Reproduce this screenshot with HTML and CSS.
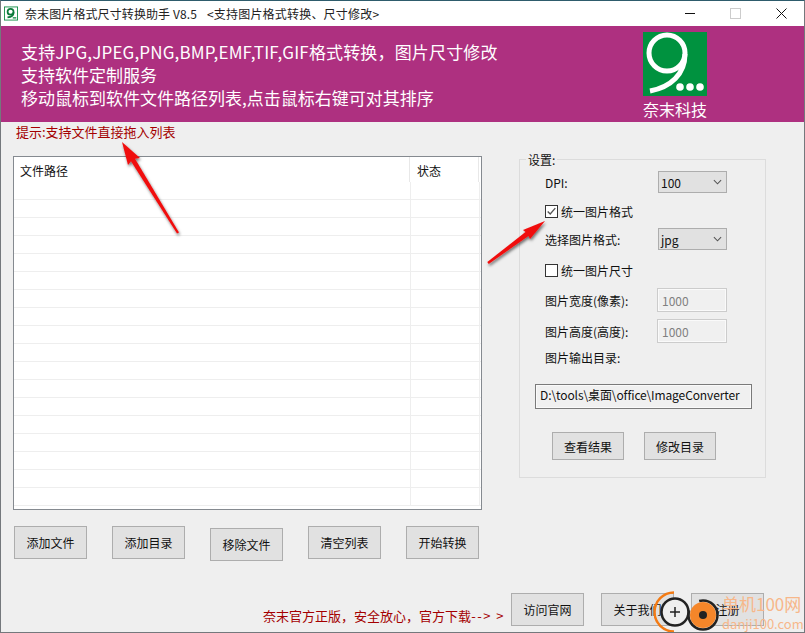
FILE: index.html
```html
<!DOCTYPE html>
<html lang="zh-CN">
<head>
  <meta charset="UTF-8">
  <title>奈末图片格式尺寸转换助手</title>
  <link rel="stylesheet" href="styles.css">
</head>
<body>
  <div class="window">
    <div class="titlebar">
      <svg class="app-icon" viewBox="0 0 16 16">
        <rect x="0.5" y="0.5" width="15" height="15" fill="#fff" stroke="#0a8a40"/>
        <circle cx="7.5" cy="6" r="3.4" fill="none" stroke="#0a7a3a" stroke-width="2"/>
        <path d="M11 6.500C11 10 8 12 4 12.500" fill="none" stroke="#0a7a3a" stroke-width="2"/>
        <path d="M10 13h4" stroke="#0a8a40" stroke-width="1.5"/>
      </svg>
      <span class="title-text">奈末图片格式尺寸转换助手 V8.5</span>
      <span class="title-sub">&lt;支持图片格式转换、尺寸修改&gt;</span>
      <div class="win-controls">
        <span class="win-min"></span>
        <span class="win-max"></span>
        <svg class="win-close" viewBox="0 0 11 11"><path d="M0.5 0.5l10 10M10.5 0.5l-10 10" stroke="#111" fill="none"/></svg>
      </div>
    </div>

    <div class="banner">
      <div class="banner-text">
        <div class="line-wide">支持JPG,JPEG,PNG,BMP,EMF,TIF,GIF格式转换，图片尺寸修改</div>
        <div>支持软件定制服务</div>
        <div>移动鼠标到软件文件路径列表,点击鼠标右键可对其排序</div>
      </div>
      <div class="brand">
        <svg class="brand-logo" viewBox="0 0 64 64">
          <rect width="64" height="64" fill="#00923f"/>
          <circle cx="24" cy="21" r="18" fill="none" stroke="#fff" stroke-width="5"/>
          <path d="M42 22C42 42 28 55 7 59" fill="none" stroke="#fff" stroke-width="5"/>
          <circle cx="37" cy="55" r="3.8" fill="#fff"/>
          <circle cx="47" cy="55" r="3.8" fill="#fff"/>
          <circle cx="57" cy="55" r="3.8" fill="#fff"/>
        </svg>
        <div class="brand-name">奈末科技</div>
      </div>
    </div>

    <div class="main">
      <div class="left">
        <div class="hint">提示:支持文件直接拖入列表</div>
        <div class="list-box">
          <table class="file-list">
            <thead>
              <tr><th class="col-path"><span>文件路径</span></th><th class="col-state"><span>状态</span></th><th class="col-rest"></th></tr>
            </thead>
            <tbody>
              <tr><td></td><td></td><td></td></tr>
              <tr><td></td><td></td><td></td></tr>
              <tr><td></td><td></td><td></td></tr>
              <tr><td></td><td></td><td></td></tr>
              <tr><td></td><td></td><td></td></tr>
              <tr><td></td><td></td><td></td></tr>
              <tr><td></td><td></td><td></td></tr>
              <tr><td></td><td></td><td></td></tr>
              <tr><td></td><td></td><td></td></tr>
              <tr><td></td><td></td><td></td></tr>
              <tr><td></td><td></td><td></td></tr>
              <tr><td></td><td></td><td></td></tr>
              <tr><td></td><td></td><td></td></tr>
              <tr><td></td><td></td><td></td></tr>
              <tr><td></td><td></td><td></td></tr>
              <tr><td></td><td></td><td></td></tr>
              <tr><td></td><td></td><td></td></tr>
              <tr><td></td><td></td><td></td></tr>
            </tbody>
          </table>
        </div>
        <div class="actions">
          <button class="btn btn-action">添加文件</button>
          <button class="btn btn-action">添加目录</button>
          <button class="btn btn-action btn-low">移除文件</button>
          <button class="btn btn-action">清空列表</button>
          <button class="btn btn-action">开始转换</button>
        </div>
      </div>

      <fieldset class="settings">
        <legend>设置:</legend>
        <div class="row row-first">
          <span class="label">DPI:</span>
          <div class="combo"><span>100</span><svg viewBox="0 0 10 6"><path d="M1 1l4 4 4-4" fill="none" stroke="#555" stroke-width="1.2"/></svg></div>
        </div>
        <div class="row row-check">
          <span class="check"><svg viewBox="0 0 13 13"><path d="M2 6.5l3 3 6-7" fill="none" stroke="#555" stroke-width="1.6"/></svg></span>
          <span>统一图片格式</span>
        </div>
        <div class="row">
          <span class="label">选择图片格式:</span>
          <div class="combo"><span>jpg</span><svg viewBox="0 0 10 6"><path d="M1 1l4 4 4-4" fill="none" stroke="#555" stroke-width="1.2"/></svg></div>
        </div>
        <div class="row row-check row-check-2">
          <span class="check"></span>
          <span>统一图片尺寸</span>
        </div>
        <div class="row row-input">
          <span class="label">图片宽度(像素):</span>
          <input class="num-input" value="1000" disabled>
        </div>
        <div class="row row-input row-input-2">
          <span class="label">图片高度(高度):</span>
          <input class="num-input" value="1000" disabled>
        </div>
        <div class="row row-out">
          <span class="label">图片输出目录:</span>
        </div>
        <input class="path-input" value="D:\tools\桌面\office\ImageConverter">
        <div class="dir-actions">
          <button class="btn btn-dir">查看结果</button>
          <button class="btn btn-dir">修改目录</button>
        </div>
      </fieldset>
    </div>

    <div class="footer">
      <span class="footer-text">奈末官方正版，安全放心，官方下载<span class="footer-arrow">--&gt;&nbsp;&gt;</span></span>
      <button class="btn btn-action">访问官网</button>
      <button class="btn btn-action">关于我们</button>
      <button class="btn btn-action">注册</button>
    </div>

    <!-- annotations drawn over the screenshot -->
    <svg class="arrows" viewBox="0 0 805 633">
      <defs>
        <filter id="shade" x="-30%" y="-30%" width="160%" height="160%">
          <feDropShadow dx="1" dy="2" stdDeviation="1.5" flood-color="#000" flood-opacity="0.55"/>
        </filter>
      </defs>
      <g fill="#f01010" filter="url(#shade)">
        <polygon points="122,142 140,158 135,158.700 179,232.400 177,233.600 131,161.300 128,165"/>
        <polygon points="545,221 530,239 528.500,236 488.700,264 487.300,262 525.500,232 523,230"/>
      </g>
    </svg>

    <div class="watermark">
      <svg class="wm-icon" viewBox="0 0 70 44">
        <path d="M20 2.500A19.500 19.500 0 0 0 20 41.500" fill="none" stroke="#f47a12" stroke-width="2.500"/>
        <circle cx="21" cy="22" r="13.500" fill="#efefef" stroke="#222" stroke-width="2.500"/>
        <path d="M21 17v10M16 22h10" stroke="#222" stroke-width="1.500"/>
        <circle cx="49" cy="25" r="14.500" fill="none" stroke="#222" stroke-width="2.500" stroke-dasharray="50 14"/>
        <circle cx="49" cy="25" r="13" fill="#f5862a"/>
        <circle cx="49" cy="25" r="4" fill="#222"/>
      </svg>
      <div class="wm-text">
        <div class="wm-cn">单机100网</div>
        <div class="wm-en">danji100.com</div>
      </div>
    </div>
  </div>
</body>
</html>
```

FILE: styles.css
```css
html, body {
  margin: 0;
  padding: 0;
  height: 100%;
  background: #efefef;
  overflow: hidden;
}

.window {
  position: relative;
  box-sizing: border-box;
  width: 805px;
  height: 633px;
  background: #efefef;
  border: 1px solid #74787c;
  border-top-color: #2e5c6c;
  font-family: "Noto Sans CJK SC", "Liberation Sans", sans-serif;
  font-size: 12px;
  color: #111;
  overflow: hidden;
}

.titlebar {
  display: flex;
  align-items: center;
  height: 25px;
  background: #fff;
  padding-left: 3px;
}

.app-icon {
  width: 14px;
  height: 15px;
}

.title-text {
  margin-left: 7px;
  color: #222;
  letter-spacing: 0.1px;
  white-space: pre;
}

.title-sub {
  margin-left: 10px;
  color: #222;
  letter-spacing: 0.2px;
}

.win-controls {
  display: flex;
  align-items: center;
  margin-left: auto;
  margin-right: 17px;
  gap: 35px;
}

.win-min {
  width: 10px;
  height: 1px;
  background: #111;
}

.win-max {
  box-sizing: border-box;
  width: 11px;
  height: 11px;
  border: 1px solid #ccc;
}

.win-close {
  width: 11px;
  height: 11px;
}

.banner {
  display: flex;
  justify-content: space-between;
  box-sizing: border-box;
  height: 96px;
  padding: 14px 97px 0 20px;
  background: #ae3080;
  color: #fff;
}

.banner-text {
  font-size: 17px;
  line-height: 23px;
}

.line-wide {
  letter-spacing: 0.16px;
}

.brand {
  margin-top: -8px;
  width: 64px;
}

.brand-logo {
  display: block;
  width: 64px;
  height: 64px;
}

.brand-name {
  font-size: 16px;
  line-height: 20px;
  margin-top: 3px;
  white-space: nowrap;
}

.main {
  display: flex;
  gap: 37px;
  padding-left: 12px;
}

.left {
  width: 469px;
}

.hint {
  box-sizing: border-box;
  height: 34px;
  padding: 1px 0 0 3px;
  font-size: 13px;
  line-height: 17px;
  color: #a40000;
}

.list-box {
  box-sizing: border-box;
  width: 469px;
  height: 354px;
  background: #fff;
  border: 1px solid #858a90;
}

.file-list {
  width: 467px;
  border-collapse: separate;
  border-spacing: 0;
  table-layout: fixed;
}

.file-list th {
  height: 25px;
  padding: 0;
  font-weight: normal;
  text-align: left;
  vertical-align: top;
}

.file-list th span {
  display: block;
  height: 25px;
  margin-right: 1px;
  padding: 5px 0 0 6px;
  box-sizing: border-box;
  line-height: 17px;
  border-right: 1px solid #e8e8e8;
}

.col-path { width: 397px; }
.col-state { width: 69px; }

.file-list td {
  height: 17px;
  padding: 0;
  border-bottom: 1px solid #eee;
  border-right: 1px solid #eee;
}

.file-list td:last-child {
  border-right: none;
}

.actions {
  display: flex;
  align-items: flex-start;
  gap: 25px;
  margin: 16px 0 0 1px;
}

.btn {
  box-sizing: border-box;
  margin: 0;
  padding: 0;
  background: #e1e1e1;
  border: 1px solid #adadad;
  font-family: inherit;
  font-size: 12px;
  color: #111;
}

.btn-action {
  width: 73px;
  height: 33px;
}

.btn-low {
  margin-top: 2px;
}

.settings {
  box-sizing: border-box;
  width: 247px;
  height: 327px;
  margin: 29px 0 0;
  padding: 0;
  border: 1px solid #dcdcdc;
}

.settings legend {
  margin-left: 6px;
  padding: 0 2px;
  font-size: 12px;
  line-height: 17px;
}

.row {
  display: flex;
  align-items: center;
  height: 22px;
  margin-left: 25px;
}

.row-first {
  margin-top: 3px;
}

.label {
  width: 113px;
  flex: none;
}

.combo {
  display: flex;
  align-items: center;
  justify-content: space-between;
  box-sizing: border-box;
  width: 69px;
  height: 22px;
  padding: 0 4px 0 2px;
  background: #e1e1e1;
  border: 1px solid #adadad;
}

.combo svg {
  width: 9px;
  height: 6px;
}

.row-check {
  box-sizing: border-box;
  height: 35px;
  padding-top: 2px;
  gap: 3px;
}

.row-check-2 {
  height: 38px;
}

.check {
  box-sizing: border-box;
  display: block;
  width: 13px;
  height: 13px;
  background: #fff;
  border: 1px solid #333;
}

.check svg {
  display: block;
  width: 11px;
  height: 11px;
}

.row-input {
  height: 24px;
}

.row-input-2 {
  margin-top: 7px;
}

.row-out {
  height: 28px;
}

.num-input {
  box-sizing: border-box;
  width: 70px;
  height: 24px;
  margin-left: -1px;
  padding: 0 4px;
  background: #f0f0f0;
  border: 1px solid #ccc;
  box-shadow: inset 0 0 0 1px #fafafa;
  font-family: inherit;
  font-size: 12px;
  color: #808080;
}

.path-input {
  display: block;
  box-sizing: border-box;
  width: 217px;
  height: 25px;
  margin: 13px 0 0 15px;
  padding: 0 4px 4px;
  background: #f0f0f0;
  border: 1px solid #7a7a7a;
  box-shadow: inset 0 0 0 1px #fafafa;
  font-family: inherit;
  font-size: 12px;
  letter-spacing: -0.1px;
  color: #111;
}

.dir-actions {
  display: flex;
  gap: 20px;
  margin: 23px 0 0 32px;
}

.btn-dir {
  width: 72px;
  height: 28px;
}

.footer {
  display: flex;
  align-items: center;
  margin-top: 32px;
  padding-right: 40px;
  justify-content: flex-end;
}

.footer .btn {
  margin-left: 17px;
}

.footer .btn:first-of-type {
  margin-left: 6px;
}

.footer-text {
  padding-top: 12px;
  font-size: 13px;
  color: #a40000;
}

.footer-arrow {
  letter-spacing: 1.5px;
}

.arrows {
  position: absolute;
  left: -1px;
  top: -1px;
  width: 805px;
  height: 633px;
  pointer-events: none;
}

.watermark {
  position: absolute;
  left: 653px;
  bottom: -2px;
  display: flex;
  align-items: flex-start;
}

.wm-icon {
  width: 70px;
  height: 44px;
}

.wm-text {
  margin: 2px 0 0 -2px;
  color: #f7b78a;
  white-space: nowrap;
}

.wm-cn {
  font-size: 17px;
  line-height: 24px;
}

.wm-en {
  font-size: 13px;
  line-height: 16px;
}
```
